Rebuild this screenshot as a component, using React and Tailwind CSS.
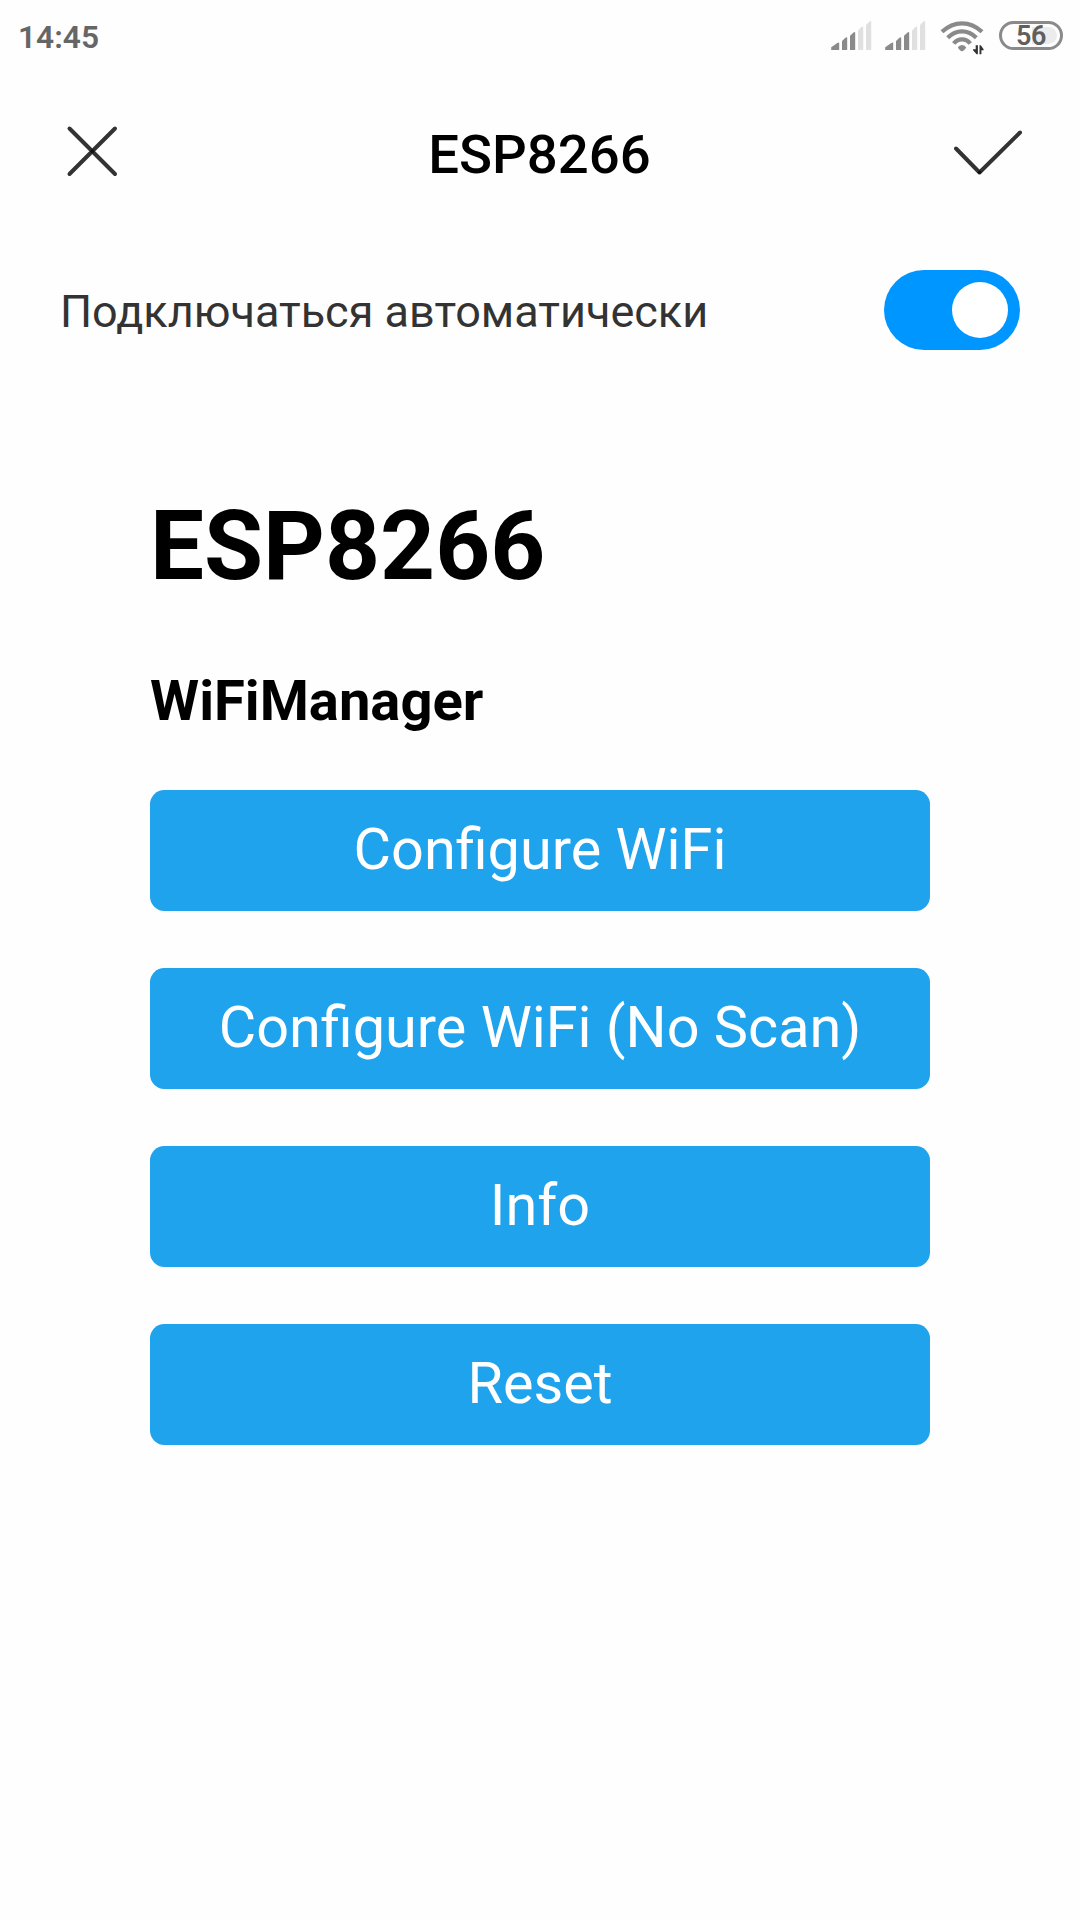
import React from "react";

function Signal() {
  return (
    <svg width="41" height="30" viewBox="0 0 41 30" className="shrink-0">
      <g fill="#8a8a8a">
        <path d="M0.2 29V26.2L6.3 22Q8.2 21 8.2 22.5V28.5Q8.2 29 7.7 29Z" />
        <path d="M11 29V20L14.2 17Q16.2 15.5 16.2 17.2V28.5Q16.2 29 15.7 29Z" />
        <path d="M19 29V14.8L22 12Q24.2 10 24.2 12V28.5Q24.2 29 23.7 29Z" />
      </g>
      <g fill="#e0e0e0">
        <path d="M27 29V9.5L30 6.5Q32.2 4.5 32.2 6.5V28.5Q32.2 29 31.7 29Z" />
        <path d="M35 29V4L38 1Q40.2 -1 40.2 1V28.5Q40.2 29 39.7 29Z" />
      </g>
    </svg>
  );
}

function Wifi() {
  return (
    <svg width="44" height="34" viewBox="0 0 44 34" className="shrink-0">
      <g fill="none" stroke="#8a8a8a" strokeWidth="4.2">
        <path d="M2 10.8Q11 2.3 22 2.3T42 10.8" />
        <path d="M7.7 16.8Q14 10.3 22 10.3T36.3 16.8" />
        <path d="M13.7 22.5Q17 18.3 22 18.3T30.3 22.5" />
      </g>
      <path d="M17.8 26.6Q19 24 22 24T26.2 26.6Q25.4 28.2 23.7 29.6Q22 30.8 20.3 29.6Q18.6 28.2 17.8 26.6Z" fill="#8a8a8a" />
      <g fill="#333">
        <path d="M35.7 24.3H37.9V33.3H36.6L33 29.3V28.3H35.7Z" />
        <path d="M39.5 33.3V24.3H40.8L43.6 28.3V29.3H41.4V33.3Z" />
      </g>
    </svg>
  );
}

const actions = ["Configure WiFi", "Configure WiFi (No Scan)", "Info", "Reset"];

export default function App() {
  return (
    <div className="flex h-[1920px] w-[1080px] flex-col overflow-hidden bg-[#fefefe] font-['Roboto',sans-serif] text-black">
      <div className="flex h-[72px] shrink-0 items-start justify-between pr-[17px] pl-[18px]">
        <span className="mt-[18px] text-[31.7px] leading-[40px] font-semibold text-[#666]">14:45</span>
        <div className="flex items-start pt-[21px]">
          <Signal />
          <span className="w-[13px]" />
          <Signal />
          <span className="w-[14px]" />
          <Wifi />
          <div className="relative ml-[15px] flex h-[29px] w-[64px] items-center justify-center rounded-full border-[3px] border-[#8a8a8a] text-[27px] leading-[29px] font-semibold text-[#5f5f5f]">
            <span className="absolute top-[3px] right-[3px] h-[17px] w-[25px] rounded-r-full bg-[#ececec]" />
            <span className="relative mt-[1px] tracking-[-0.5px]">56</span>
          </div>
        </div>
      </div>

      <header className="flex h-[164px] shrink-0 items-start justify-between pr-[56px] pl-[66px]">
        <svg width="54" height="54" viewBox="0 0 54 54" className="mt-[53px]">
          <g stroke="#333" strokeWidth="4" strokeLinecap="round">
            <path d="M3.5 3.5L49 49M49 3.5L3.5 49" />
          </g>
          <circle cx="26.25" cy="26.25" r="2" fill="#111" />
        </svg>
        <h1 className="mt-[50px] ml-[5px] text-[54.5px] leading-[64px] font-medium">ESP8266</h1>
        <svg width="70" height="48" viewBox="0 0 70 48" className="mt-[57px]">
          <path d="M2 19.5L25.5 43.5L66 3.5" fill="none" stroke="#333" strokeWidth="4" strokeLinecap="round" strokeLinejoin="round" />
          <circle cx="25.5" cy="43.2" r="1.8" fill="#111" />
        </svg>
      </header>

      <div className="flex h-[148px] shrink-0 items-center justify-between pr-[60px] pl-[60px]">
        <span className="mt-[3px] text-[45px] leading-[54px] text-[#333]">Подключаться автоматически</span>
        <div className="flex h-[79.4px] w-[135.6px] items-center justify-end rounded-full bg-[#0096ff] pr-[12px]">
          <div className="size-[56px] rounded-full bg-white" />
        </div>
      </div>

      <main className="flex w-[780px] flex-col self-center pt-[106px]">
        <h2 className="text-[96px] leading-[112px] font-bold">ESP8266</h2>
        <h3 className="mt-[66px] text-[56.16px] leading-[66px] font-bold">WiFiManager</h3>
        <div className="mt-[56px] flex flex-col gap-[57px]">
          {actions.map((label) => (
            <button
              key={label}
              className="h-[121px] rounded-[14.4px] bg-[#1fa3ec] pb-[2px] text-center text-[57.6px] leading-[115px] text-white"
            >
              {label}
            </button>
          ))}
        </div>
      </main>
    </div>
  );
}
